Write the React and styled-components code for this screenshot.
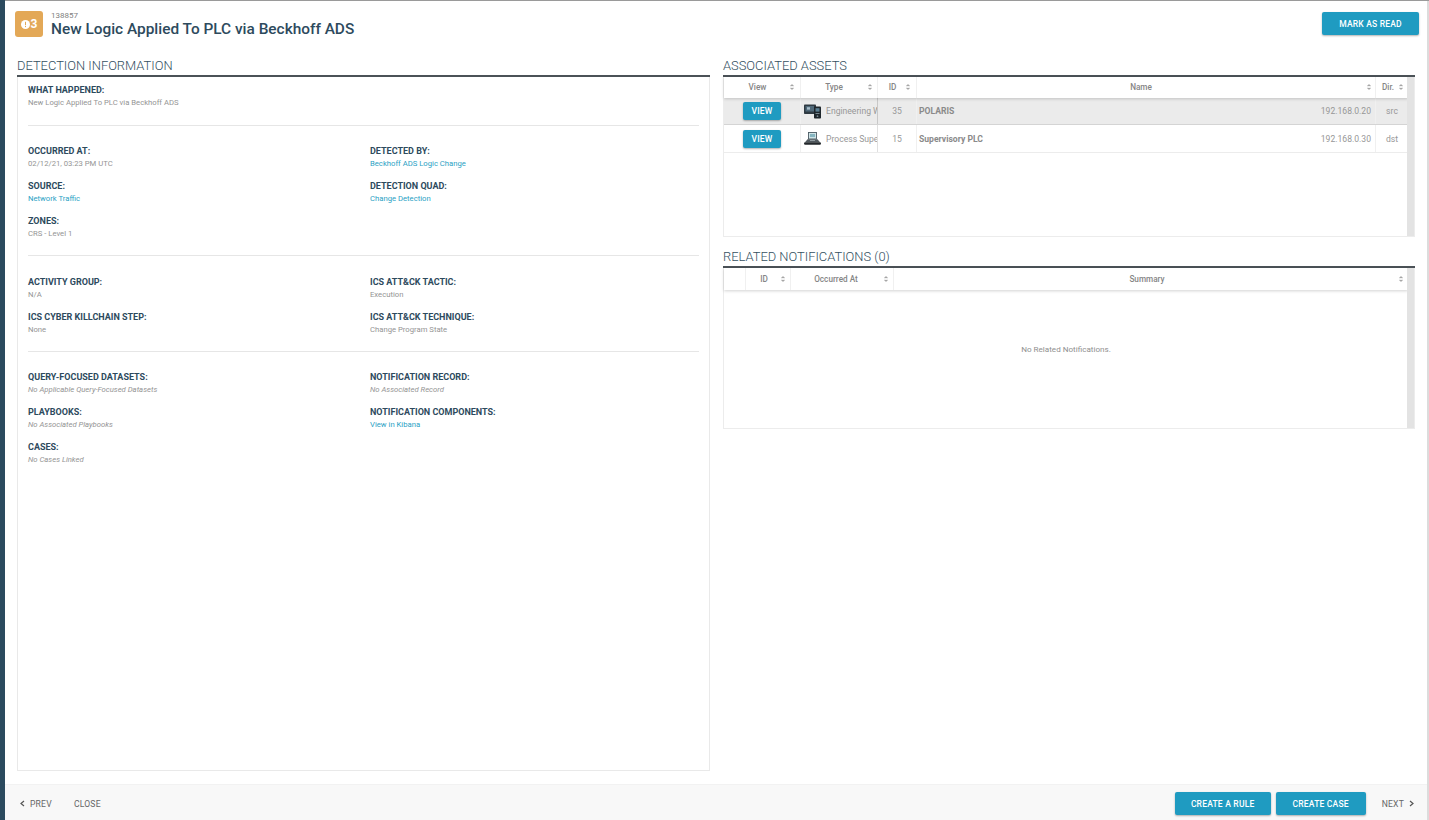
import React from "react";
import styled, { createGlobalStyle } from "styled-components";

const Global = createGlobalStyle`
  html, body { margin: 0; padding: 0; height: 820px; overflow: hidden; background: #2b4a5e; }
  body { font-family: Roboto, "Liberation Sans", sans-serif; }
  #root { height: 820px; }
  * { box-sizing: border-box; }
`;

const Shell = styled.div`
  height: 820px;
  margin-left: 5px;
  padding-top: 1px;
  background: #9a9a9a;
`;
const Modal = styled.div`
  height: 819px;
  background: #fff;
  border-right: 2px solid #dcdcdc;
  display: flex;
  flex-direction: column;
`;
const Header = styled.header`
  height: 50px;
  flex: none;
  display: flex;
  align-items: flex-start;
  padding: 10px 8px 0 10px;
`;
const Badge = styled.div`
  width: 28px;
  height: 26px;
  border-radius: 3px;
  background: #e3a857;
  color: #fff;
  font-size: 12px;
  font-weight: 700;
  display: flex;
  align-items: center;
  justify-content: center;
  gap: 1px;
`;
const TitleBlock = styled.div`
  margin-left: 8px;
  flex: 1;
`;
const RecordId = styled.div`
  font-size: 8px;
  line-height: 9px;
  color: #808080;
`;
const Title = styled.h1`
  margin: 0;
  font-size: 15.4px;
  line-height: 19px;
  font-weight: 500;
  color: #2d4a5d;
`;
const Button = styled.button`
  flex: none;
  border: 0;
  border-radius: 2px;
  background: #1f9bc1;
  color: #fff;
  font-family: inherit;
  font-size: 8.5px;
  font-weight: 500;
  letter-spacing: 0.2px;
  box-shadow: 0 1px 2px rgba(0, 0, 0, 0.3);
  padding: 0;
  width: ${(p) => p.$w}px;
  height: ${(p) => p.$h}px;
`;
const HeaderButton = styled(Button)`
  margin-top: 1px;
`;
const Body = styled.main`
  flex: 1;
  min-height: 0;
  display: grid;
  grid-template-columns: 693px 692px;
  column-gap: 13px;
  padding: 0 0 13px 12px;
`;
const Column = styled.section`
  display: flex;
  flex-direction: column;
  min-height: 0;
`;
const SectionTitle = styled.h2`
  margin: 0;
  height: 26px;
  padding-top: 7px;
  border-bottom: 2px solid #4b5257;
  font-size: 12.9px;
  line-height: 16px;
  font-weight: 300;
  color: #34505f;
  white-space: nowrap;
`;
const InfoPanel = styled.div`
  flex: 1;
  border: 1px solid #e9e9e9;
  border-top: 0;
  padding: 7px 10px 0 10px;
`;
const Divider = styled.hr`
  margin: 0;
  border: 0;
  border-top: 1px solid #e6e6e6;
`;
const InfoGrid = styled.div`
  display: grid;
  grid-template-columns: 342px 1fr;
  grid-auto-rows: 35px;
  padding: ${(p) => p.$pad};
`;
const Field = styled.div`
  display: flex;
  flex-direction: column;
`;
const Label = styled.div`
  font-size: 9px;
  line-height: 13px;
  font-weight: 700;
  color: #2d4a5d;
  white-space: nowrap;
`;
const Value = styled.div`
  font-size: 7.7px;
  line-height: 11px;
  font-weight: 400;
  color: ${(p) => (p.$link ? "#2a9fc4" : "#949494")};
  font-style: ${(p) => (p.$empty ? "italic" : "normal")};
  white-space: nowrap;
`;
const TableBox = styled.div`
  position: relative;
  height: ${(p) => p.$h}px;
  border: 1px solid #ececec;
  border-top: 0;
  padding-right: 6px;
  &::after {
    content: "";
    position: absolute;
    top: 0;
    right: 0;
    bottom: 0;
    width: 7px;
    background: #e3e3e3;
  }
`;
const Row = styled.div`
  display: grid;
  grid-template-columns: ${(p) => p.$cols};
  height: ${(p) => p.$h}px;
  align-items: stretch;
  background: ${(p) => (p.$selected ? "#ebebeb" : "#fff")};
  border-bottom: ${(p) => (p.$selected ? "1px solid #d4d4d4" : "1px solid #ececec")};
`;
const HeadRow = styled(Row)`
  border-bottom: 0;
  box-shadow: 0 1px 3px rgba(0, 0, 0, 0.18);
  position: relative;
`;
const HeadCell = styled.div`
  position: relative;
  display: flex;
  align-items: center;
  justify-content: center;
  padding-right: ${(p) => p.$pr || 0}px;
  padding-bottom: 1px;
  font-size: 8.2px;
  font-weight: 500;
  color: #858585;
  border-right: ${(p) => (p.$plain ? "0" : "1px solid #f0f0f0")};
`;
const SortMark = styled.svg`
  position: absolute;
  right: ${(p) => p.$r || 5}px;
  top: 50%;
  width: 6px;
  height: 8px;
  margin-top: -4.5px;
`;
const Cell = styled.div`
  display: flex;
  align-items: center;
  justify-content: ${(p) => p.$justify || "center"};
  gap: ${(p) => p.$gap || 0}px;
  padding: ${(p) => p.$pad || "0"};
  min-width: 0;
  overflow: hidden;
  font-size: 8.6px;
  font-weight: ${(p) => (p.$bold ? 700 : 400)};
  color: ${(p) => (p.$bold ? "#8a8a8a" : "#979797")};
  white-space: nowrap;
  border-right: ${(p) => (p.$sep || "1px solid #f0f0f0")};
  svg { flex: none; }
`;
const NameText = styled.span`
  flex: 1;
`;
const Address = styled.span`
  font-size: 8.6px;
  font-weight: 400;
  color: #979797;
`;
const Empty = styled.div`
  height: 118px;
  display: flex;
  align-items: center;
  justify-content: center;
  font-size: 8.1px;
  color: #8f8f8f;
`;
const Spacer = styled.div`
  height: 5px;
`;
const Footer = styled.footer`
  flex: none;
  height: 36px;
  background: #f8f8f8;
  display: flex;
  align-items: center;
  padding: 2px 13px 0 15px;
  border-top: 1px solid #f2f2f2;
  font-size: 8.6px;
  color: #666;
`;
const NavLink = styled.span`
  display: inline-flex;
  align-items: center;
  gap: 5px;
  margin-left: ${(p) => p.$ml || 0}px;
  letter-spacing: 0.2px;
`;
const FooterGap = styled.div`
  flex: 1;
`;
const FooterButton = styled(Button)`
  margin-right: 5px;
`;

const Sort = ({ r }) => (
  <SortMark $r={r} viewBox="0 0 6 8">
    <path d="M1.2 3 L3 1.3 L4.8 3 Z M1.2 5 L3 6.7 L4.8 5 Z" fill="#a5a5a5" stroke="#a5a5a5" strokeWidth="0.3" />
  </SortMark>
);

const WorkstationIcon = () => (
  <svg width="17" height="15" viewBox="0 0 17 15">
    <rect x="0" y="0.5" width="12" height="9.5" rx="0.8" fill="#2f3a42" />
    <rect x="1.5" y="2" width="8.5" height="5.5" fill="#4f6878" />
    <rect x="3" y="3.2" width="3" height="2.4" fill="#a7bdca" />
    <rect x="10" y="2.5" width="7" height="12" rx="0.8" fill="#1e262b" />
    <rect x="11.5" y="4.2" width="4" height="3.4" fill="#5b7f92" />
    <rect x="11.5" y="9" width="4" height="1" fill="#77868f" />
    <circle cx="13.5" cy="12.2" r="0.9" fill="#77868f" />
  </svg>
);
const PlcIcon = () => (
  <svg width="17" height="13" viewBox="0 0 17 13">
    <rect x="4.5" y="0.5" width="8" height="6.5" fill="#cfe3e6" stroke="#4a5a63" strokeWidth="0.9" />
    <rect x="6" y="2" width="5" height="3" fill="#86b5c0" />
    <path d="M3.5 7.2 H13.5 L16 10.2 H1 Z" fill="#50585e" />
    <rect x="0" y="10.2" width="17" height="2.6" rx="1.2" fill="#23282c" />
    <rect x="6" y="8" width="5" height="0.9" fill="#99a3a9" />
  </svg>
);
const Chevron = ({ left }) => (
  <svg width="5" height="7" viewBox="0 0 5 7">
    <path d={left ? "M4 1 L1 3.5 L4 6" : "M1 1 L4 3.5 L1 6"} fill="none" stroke="#555" strokeWidth="1.2" />
  </svg>
);

const F = ({ label, value, link, empty }) => (
  <Field>
    <Label>{label}</Label>
    <Value $link={link} $empty={empty}>{value}</Value>
  </Field>
);

const assetCols = "77px 77px 39px 1fr 32px";
const noteCols = "22px 45px 103px 1fr";

export default function App() {
  return (
    <>
      <Global />
      <Shell>
        <Modal>
          <Header>
            <Badge>
              <svg width="9" height="9" viewBox="0 0 9 9">
                <circle cx="4.5" cy="4.5" r="4.5" fill="#fff" />
                <rect x="4" y="1.8" width="1" height="3.4" fill="#e3a857" />
                <rect x="4" y="6" width="1" height="1.1" fill="#e3a857" />
              </svg>
              3
            </Badge>
            <TitleBlock>
              <RecordId>138857</RecordId>
              <Title>New Logic Applied To PLC via Beckhoff ADS</Title>
            </TitleBlock>
            <HeaderButton $w={97} $h={23}>MARK AS READ</HeaderButton>
          </Header>
          <Body>
            <Column>
              <SectionTitle>DETECTION INFORMATION</SectionTitle>
              <InfoPanel>
                <InfoGrid $pad="0 0 6px 0">
                  <F label="WHAT HAPPENED:" value="New Logic Applied To PLC via Beckhoff ADS" />
                </InfoGrid>
                <Divider />
                <InfoGrid $pad="19px 0 5px 0">
                  <F label="OCCURRED AT:" value="02/12/21, 03:23 PM UTC" />
                  <F label="DETECTED BY:" value="Beckhoff ADS Logic Change" link />
                  <F label="SOURCE:" value="Network Traffic" link />
                  <F label="DETECTION QUAD:" value="Change Detection" link />
                  <F label="ZONES:" value="CRS - Level 1" />
                </InfoGrid>
                <Divider />
                <InfoGrid $pad="20px 0 5px 0">
                  <F label="ACTIVITY GROUP:" value="N/A" />
                  <F label="ICS ATT&CK TACTIC:" value="Execution" />
                  <F label="ICS CYBER KILLCHAIN STEP:" value="None" />
                  <F label="ICS ATT&CK TECHNIQUE:" value="Change Program State" />
                </InfoGrid>
                <Divider />
                <InfoGrid $pad="19px 0 0 0">
                  <F label="QUERY-FOCUSED DATASETS:" value="No Applicable Query-Focused Datasets" empty />
                  <F label="NOTIFICATION RECORD:" value="No Associated Record" empty />
                  <F label="PLAYBOOKS:" value="No Associated Playbooks" empty />
                  <F label="NOTIFICATION COMPONENTS:" value="View in Kibana" link />
                  <F label="CASES:" value="No Cases Linked" empty />
                </InfoGrid>
              </InfoPanel>
            </Column>
            <Column>
              <SectionTitle>ASSOCIATED ASSETS</SectionTitle>
              <TableBox $h={160}>
                <HeadRow $cols={assetCols} $h={21}>
                  <HeadCell $pr={9}>View<Sort r={5} /></HeadCell>
                  <HeadCell $pr={10}>Type<Sort r={4} /></HeadCell>
                  <HeadCell $pr={9}>ID<Sort r={5} /></HeadCell>
                  <HeadCell $pr={10}>Name<Sort r={3} /></HeadCell>
                  <HeadCell $pr={8} $plain>Dir.<Sort r={4} /></HeadCell>
                </HeadRow>
                <Row $cols={assetCols} $h={27} $selected>
                  <Cell><Button $w={38} $h={18}>VIEW</Button></Cell>
                  <Cell $justify="flex-start" $gap={5} $pad="0 0 0 3px" $sep="1px solid #c8c8c8"><WorkstationIcon /><span>Engineering Workstation</span></Cell>
                  <Cell>35</Cell>
                  <Cell $justify="space-between" $bold $pad="0 4px 0 2px"><NameText>POLARIS</NameText><Address>192.168.0.20</Address></Cell>
                  <Cell $sep="0">src</Cell>
                </Row>
                <Row $cols={assetCols} $h={28}>
                  <Cell><Button $w={38} $h={18}>VIEW</Button></Cell>
                  <Cell $justify="flex-start" $gap={5} $pad="0 0 0 3px" $sep="1px solid #e0e0e0"><PlcIcon /><span>Process Supervisor</span></Cell>
                  <Cell>15</Cell>
                  <Cell $justify="space-between" $bold $pad="0 4px 0 2px"><NameText>Supervisory PLC</NameText><Address>192.168.0.30</Address></Cell>
                  <Cell $sep="0">dst</Cell>
                </Row>
              </TableBox>
              <Spacer />
              <SectionTitle>RELATED NOTIFICATIONS (0)</SectionTitle>
              <TableBox $h={161}>
                <HeadRow $cols={noteCols} $h={22}>
                  <HeadCell />
                  <HeadCell $pr={8}>ID<Sort r={4} /></HeadCell>
                  <HeadCell $pr={12}>Occurred At<Sort r={4} /></HeadCell>
                  <HeadCell $pr={8} $plain>Summary<Sort r={4} /></HeadCell>
                </HeadRow>
                <Empty>No Related Notifications.</Empty>
              </TableBox>
            </Column>
          </Body>
          <Footer>
            <NavLink><Chevron left /> PREV</NavLink>
            <NavLink $ml={22}>CLOSE</NavLink>
            <FooterGap />
            <FooterButton $w={96} $h={23}>CREATE A RULE</FooterButton>
            <Button $w={90} $h={23}>CREATE CASE</Button>
            <NavLink $ml={16}>NEXT <Chevron /></NavLink>
          </Footer>
        </Modal>
      </Shell>
    </>
  );
}
